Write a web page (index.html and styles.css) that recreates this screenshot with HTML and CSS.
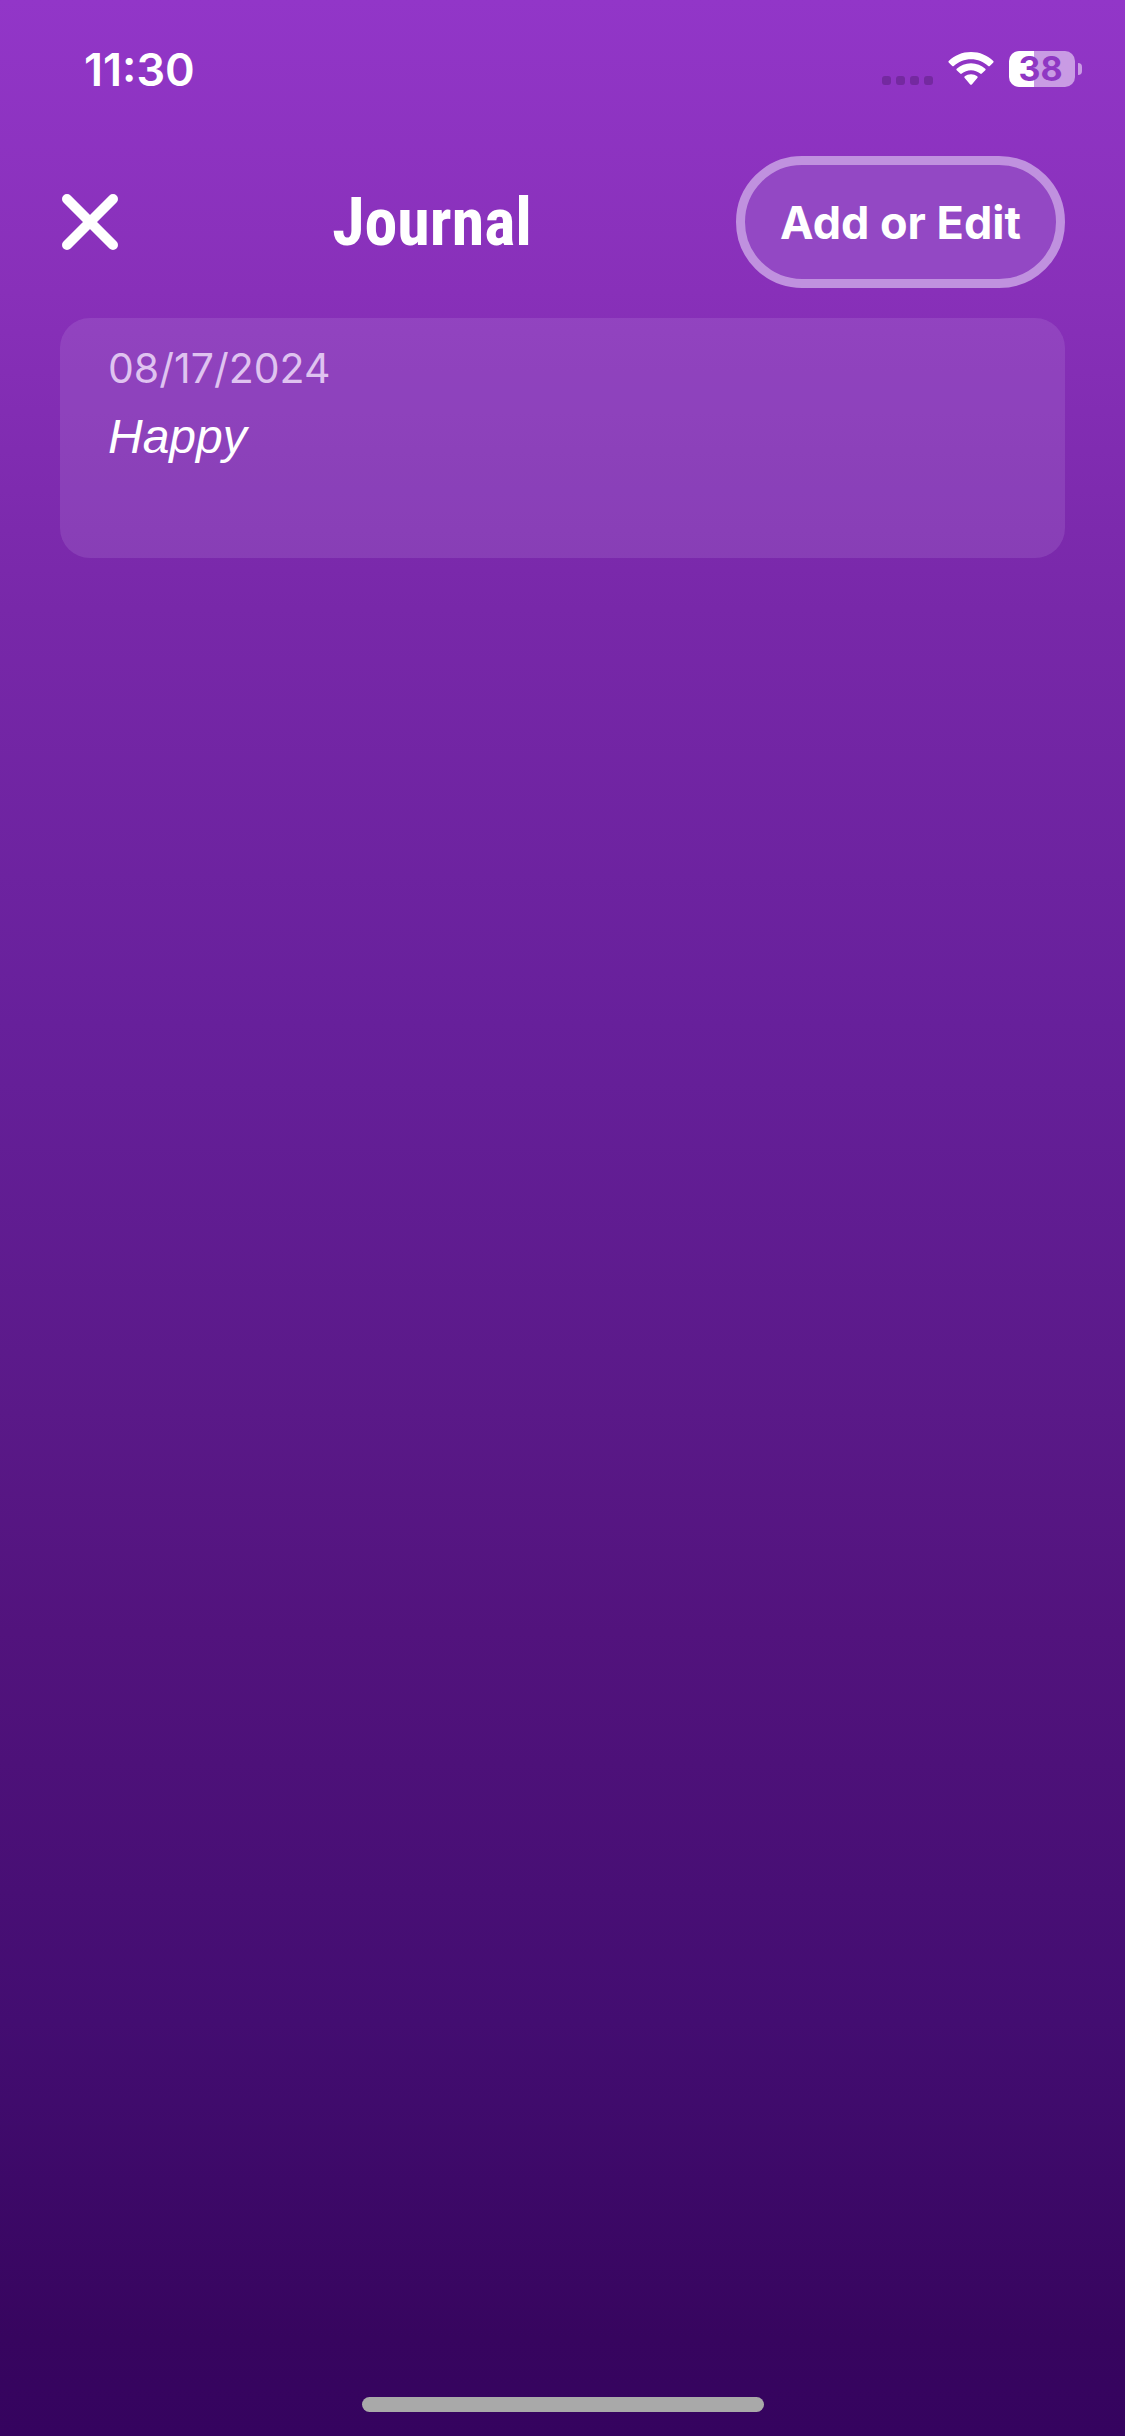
FILE: index.html
```html
<!DOCTYPE html>
<html lang="en">
<head>
<meta charset="utf-8">
<meta name="viewport" content="width=device-width, initial-scale=1">
<title>Journal</title>
<link rel="stylesheet" href="styles.css">
</head>
<body>
<div class="status-bar">
  <time class="clock">11:30</time>
  <div class="indicators">
    <svg class="signal" viewBox="0 0 52 36" aria-hidden="true">
      <rect x="0" y="25" width="9" height="9" rx="3"/>
      <rect x="14" y="25" width="9" height="9" rx="3"/>
      <rect x="28" y="25" width="9" height="9" rx="3"/>
      <rect x="42" y="25" width="9" height="9" rx="3"/>
    </svg>
    <svg class="wifi" viewBox="0 0 46 36" aria-hidden="true">
      <path d="M23 1C14.300 1 6.400 4.400.7 9.900Q0 10.700.7 11.500L4.200 14.900Q5 15.600 5.800 14.900C10.400 10.700 16.400 8.200 23 8.200S35.600 10.700 40.200 14.900Q41 15.600 41.800 14.900L45.300 11.500Q46 10.700 45.300 9.900C39.600 4.400 31.700 1 23 1Z"/>
      <path d="M23 12.200C17.500 12.200 12.500 14.300 8.700 17.700Q7.900 18.500 8.700 19.300L12.200 22.600Q13 23.300 13.800 22.600C16.300 20.500 19.500 19.200 23 19.200S29.700 20.500 32.200 22.600Q33 23.300 33.800 22.600L37.300 19.300Q38.100 18.500 37.300 17.700C33.500 14.300 28.500 12.200 23 12.200Z"/>
      <path d="M23 23.200C20.600 23.200 18.400 24 16.700 25.300Q15.800 26.200 16.700 27L22.200 33.400Q23 34.200 23.800 33.400L29.300 27Q30.200 26.200 29.300 25.300C27.600 24 25.400 23.200 23 23.200Z"/>
    </svg>
    <div class="battery"><span class="charge">38</span><span class="nub"></span></div>
  </div>
</div>
<header class="header">
  <button class="close" type="button" aria-label="Close">
    <svg viewBox="0 0 56 56" aria-hidden="true"><path d="M5 5L51 51M51 5L5 51"/></svg>
  </button>
  <h1 class="title">Journal</h1>
  <button class="edit" type="button">Add or Edit</button>
</header>
<main class="entries">
  <article class="entry">
    <time class="date" datetime="2024-08-17">08/17/2024</time>
    <p class="mood">Happy</p>
  </article>
</main>
<div class="home-bar"></div>
</body>
</html>
```
FILE: styles.css
```css
* {
  box-sizing: border-box;
}

body {
  margin: 0;
  min-height: 100vh;
  display: flex;
  flex-direction: column;
  color: #fff;
  font-family: Inter, "Liberation Sans", sans-serif;
  background: linear-gradient(#9236c8 0%, #8830b9 12%, #7828a9 25%, #67209b 42%, #5a1988 58%, #52137d 67%, #430d71 83%, #37055f 96%, #35035f 100%);
}

.status-bar {
  display: flex;
  align-items: center;
  justify-content: space-between;
  height: 138px;
  padding: 0 43px 0 84px;
}

.clock {
  font-size: 45px;
  font-weight: 600;
}

.indicators {
  display: flex;
  align-items: center;
}

.signal {
  width: 52px;
  height: 36px;
  margin-right: 14px;
  fill: #7429a0;
}

.wifi {
  width: 46px;
  height: 36px;
  margin-right: 15px;
  fill: #fff;
}

.battery {
  display: flex;
  align-items: center;
  gap: 3px;
}

.charge {
  width: 66px;
  height: 36px;
  padding-right: 3px;
  border-radius: 10px;
  background: linear-gradient(90deg, #fff 38%, #c99be4 38%);
  color: #8f37c3;
  font-size: 34px;
  font-weight: 700;
  line-height: 36px;
  text-align: center;
}

.nub {
  width: 4px;
  height: 12px;
  border-radius: 0 4px 4px 0;
  background: #c99be4;
}

.header {
  display: flex;
  align-items: center;
  justify-content: space-between;
  padding: 18px 60px 30px;
}

button {
  font: inherit;
  color: inherit;
  cursor: pointer;
}

.close {
  width: 68px;
  height: 60px;
  padding: 2px;
  border: 0;
  background: none;
}

.close svg {
  display: block;
  width: 56px;
  height: 56px;
  fill: none;
  stroke: #fff;
  stroke-width: 10px;
  stroke-linecap: round;
}

.title {
  margin: 0;
  padding-top: 2px;
  font-family: "Roboto Condensed", "Liberation Sans", sans-serif;
  font-size: 66px;
  font-weight: 700;
  line-height: 72px;
}

.edit {
  height: 132px;
  padding: 0 35px;
  border: 9px solid #c091df;
  border-radius: 66px;
  background: #9348c4;
  font-size: 45px;
  font-weight: 700;
  white-space: nowrap;
}

.entries {
  flex: 1;
  padding: 0 60px;
}

.entry {
  min-height: 240px;
  padding: 23px 48px;
  border-radius: 30px;
  background: rgba(190, 150, 225, 0.2);
}

.date {
  display: block;
  color: #dfc3f0;
  font-size: 41px;
  line-height: 54px;
}

.mood {
  margin: 12px 0 0;
  font-family: "Liberation Sans", sans-serif;
  font-size: 48px;
  font-style: italic;
  line-height: 60px;
}

.home-bar {
  align-self: center;
  width: 402px;
  max-width: 60%;
  height: 15px;
  margin-bottom: 24px;
  border-radius: 8px;
  background: #a9a9a9;
}
```
